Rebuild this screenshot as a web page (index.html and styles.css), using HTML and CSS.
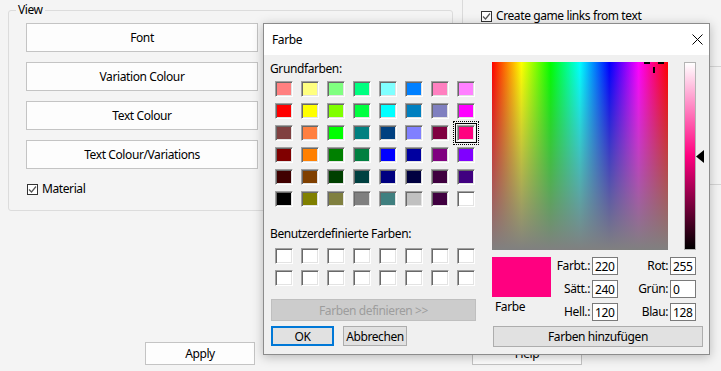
FILE: index.html
```html
<!DOCTYPE html>
<html lang="de">
<head>
    <meta charset="UTF-8">
    <title>Farbe</title>
    <link rel="stylesheet" href="styles.css">
</head>
<body>
    <div class="window">
        <div class="top">
            <fieldset class="group">
                <legend>View</legend>
                <button class="btn wide">Font</button>
                <button class="btn wide">Variation Colour</button>
                <button class="btn wide">Text Colour</button>
                <button class="btn wide">Text Colour/Variations</button>
                <label class="check material">
                    <span class="box"><svg width="9" height="9" viewBox="0 0 9 9"><path d="M1 4.5 L3.5 7 L8 1.5" fill="none" stroke="#555" stroke-width="1.2"/></svg></span>
                    Material
                </label>
            </fieldset>
            <div class="side">
                <label class="check">
                    <span class="box"><svg width="9" height="9" viewBox="0 0 9 9"><path d="M1 4.5 L3.5 7 L8 1.5" fill="none" stroke="#555" stroke-width="1.2"/></svg></span>
                    Create game links from text
                </label>
                <div class="sep first"></div>
                <div class="sep second"></div>
            </div>
        </div>

        <div class="bottom">
            <button class="btn small">Apply</button>
            <button class="btn small help">Help</button>
        </div>

        <!-- Farbauswahl-Dialog -->
        <div class="dialog">
            <div class="titlebar">
                <span>Farbe</span>
                <svg class="close" width="11" height="11" viewBox="0 0 11 11"><path d="M0.5 0.5 L10.5 10.5 M10.5 0.5 L0.5 10.5" stroke="#000" stroke-width="1"/></svg>
            </div>
            <div class="dbody">
                <div class="left">
                    <div class="lbl">Grundfarben:</div>
                    <div class="swatches" id="basic"></div>
                    <div class="lbl custom-lbl">Benutzerdefinierte Farben:</div>
                    <div class="swatches custom" id="custom"></div>
                    <button class="dbtn define" disabled>Farben definieren &gt;&gt;</button>
                    <div class="actions">
                        <button class="dbtn ok">OK</button>
                        <button class="dbtn cancel">Abbrechen</button>
                    </div>
                </div>
                <div class="right">
                    <div class="picker">
                        <div class="spectrum">
                            <svg class="cross" width="24" height="12" viewBox="0 0 24 12">
                                <rect x="0" y="0" width="6" height="2" fill="#000"/>
                                <rect x="14" y="0" width="6" height="2" fill="#000"/>
                                <rect x="9" y="5" width="2" height="6" fill="#000"/>
                            </svg>
                        </div>
                        <div class="lum">
                            <svg class="arrow" width="8" height="13" viewBox="0 0 8 13"><path d="M0 6.5 L8 0 L8 13 Z" fill="#000"/></svg>
                        </div>
                    </div>
                    <div class="values">
                        <div class="preview-col">
                            <div class="preview"></div>
                            <div class="preview-lbl">Farbe</div>
                        </div>
                        <div class="fields">
                            <span class="flbl">Farbt.:</span><input value="220">
                            <span class="flbl">Rot:</span><input value="255">
                            <span class="flbl">Sätt.:</span><input value="240">
                            <span class="flbl">Grün:</span><input value="0">
                            <span class="flbl">Hell.:</span><input value="120">
                            <span class="flbl">Blau:</span><input value="128">
                        </div>
                    </div>
                    <button class="dbtn add">Farben hinzufügen</button>
                </div>
            </div>
        </div>
    </div>

    <script>
        const basicColors = [
            '#ff8080', '#ffff80', '#80ff80', '#00ff80', '#80ffff', '#0080ff', '#ff80c0', '#ff80ff',
            '#ff0000', '#ffff00', '#80ff00', '#00ff40', '#00ffff', '#0080c0', '#8080c0', '#ff00ff',
            '#804040', '#ff8040', '#00ff00', '#008080', '#004080', '#8080ff', '#800040', '#ff0080',
            '#800000', '#ff8000', '#008000', '#008040', '#0000ff', '#0000a0', '#800080', '#8000ff',
            '#400000', '#804000', '#004000', '#004040', '#000080', '#000040', '#400040', '#400080',
            '#000000', '#808000', '#808040', '#808080', '#408080', '#c0c0c0', '#400040', '#ffffff'
        ];

        const basic = document.getElementById('basic');
        basicColors.forEach(function(color, i) {
            const sw = document.createElement('div');
            sw.className = 'sw';
            sw.style.backgroundColor = color;
            if (i === 23) sw.classList.add('selected');
            basic.appendChild(sw);
        });

        const custom = document.getElementById('custom');
        for (let i = 0; i < 16; i++) {
            const sw = document.createElement('div');
            sw.className = 'sw';
            sw.style.backgroundColor = '#fff';
            custom.appendChild(sw);
        }
    </script>
</body>
</html>
```

FILE: styles.css
```css
* {
    margin: 0;
    padding: 0;
    box-sizing: border-box;
}

body {
    font-family: 'Noto Sans', 'DejaVu Sans', sans-serif;
    font-size: 12px;
    letter-spacing: -0.4px;
    line-height: 16px;
    color: #000;
    background-color: #f4f4f4;
    width: 721px;
    height: 371px;
    overflow: hidden;
}

.window {
    position: relative;
    width: 721px;
    height: 371px;
    display: flex;
    flex-direction: column;
}

.top {
    display: flex;
    padding-left: 8px;
}

.group {
    width: 445px;
    margin-top: 2px;
    border: 1px solid #dcdcdc;
    border-radius: 3px;
    padding: 5px 0 13px 17px;
    display: flex;
    flex-direction: column;
    gap: 10px;
    min-width: 0;
}

.group legend {
    margin-left: -10px;
    padding: 0 2px;
    line-height: 16px;
}

.btn {
    font-family: inherit;
    font-size: 12px;
    letter-spacing: inherit;
    color: #000;
    background-color: #fdfdfd;
    border: 1px solid #c4c4c4;
}

.btn.wide {
    width: 232px;
    height: 29px;
}

.check {
    display: flex;
    align-items: center;
    gap: 4px;
    height: 16px;
}

.check .box {
    width: 11px;
    height: 11px;
    border: 1px solid #333;
    background-color: #fff;
    display: flex;
    align-items: center;
    justify-content: center;
}

.material {
    margin-top: 2px;
    padding-left: 1px;
}

.side {
    flex: 1;
    margin-left: 9px;
    border-left: 1px solid #dadada;
    padding: 8px 0 0 18px;
}

.sep {
    border-top: 1px solid #d5d5d5;
    margin-left: -18px;
}

.sep.first {
    margin-top: 42px;
}

.sep.second {
    margin-top: 117px;
}

.bottom {
    margin-top: auto;
    display: flex;
    padding: 0 0 6px 145px;
}

.btn.small {
    width: 110px;
    height: 23px;
}

.btn.help {
    margin-left: 217px;
}

/* Dialog */
.dialog {
    position: absolute;
    left: 263px;
    top: 23px;
    width: 447px;
    height: 332px;
    border: 1px solid #8c8c8c;
    background-color: #f0f0f0;
    box-shadow: 0 2px 10px rgba(0,0,0,0.25);
    display: flex;
    flex-direction: column;
}

.titlebar {
    height: 31px;
    background-color: #fff;
    display: flex;
    align-items: center;
    justify-content: space-between;
    padding: 0 6px 0 8px;
}

.dbody {
    flex: 1;
    display: flex;
    gap: 16px;
    padding: 6px 0 0 6px;
}

.left {
    width: 206px;
    display: flex;
    flex-direction: column;
}

.swatches {
    display: grid;
    grid-template-columns: repeat(8, 18px);
    grid-auto-rows: 16px;
    column-gap: 8px;
    row-gap: 6px;
    margin: 4px 0 0 5px;
}

.sw {
    position: relative;
    border: 1px solid;
    border-color: #a0a0a0 #fff #fff #a0a0a0;
    box-shadow: inset 1px 1px 0 #696969, inset -1px -1px 0 #e3e3e3;
}

.sw.selected {
    outline: 1px solid #000;
    outline-offset: 1px;
}

.sw.selected::after {
    content: '';
    position: absolute;
    inset: -5px;
    border: 1px dotted #000;
}

.custom-lbl {
    margin-top: 19px;
}

.swatches.custom {
    margin-top: 6px;
}

.dbtn {
    font-family: inherit;
    font-size: 12px;
    letter-spacing: inherit;
    color: #000;
    background-color: #e1e1e1;
    border: 1px solid #adadad;
}

.define {
    width: 205px;
    height: 22px;
    margin: 13px 0 0 1px;
    background-color: #cccccc;
    border-color: #bfbfbf;
    color: #9d9d9d;
}

.actions {
    display: flex;
    gap: 9px;
    margin: 5px 0 0 1px;
}

.ok {
    width: 63px;
    height: 20px;
    border: 2px solid #0078d7;
}

.cancel {
    width: 64px;
    height: 20px;
}

.right {
    display: flex;
    flex-direction: column;
}

.picker {
    display: flex;
    gap: 16px;
    margin-top: 1px;
}

.spectrum {
    position: relative;
    width: 176px;
    height: 188px;
    background:
        linear-gradient(to bottom, rgba(128,128,128,0), #808080),
        linear-gradient(to right, #f00, #ff0 16.7%, #0f0 33.3%, #0ff 50%, #00f 66.7%, #f0f 83.3%, #f00);
}

.cross {
    position: absolute;
    left: 152px;
    top: 0;
}

.lum {
    position: relative;
    width: 12px;
    height: 188px;
    border: 1px solid #b4b4b4;
    background: linear-gradient(to bottom, #fff, #ff0080 50%, #000);
}

.arrow {
    position: absolute;
    right: -9px;
    top: 87px;
}

.values {
    display: flex;
    margin-top: 7px;
}

.preview {
    width: 59px;
    height: 40px;
    background-color: #ff0080;
}

.preview-lbl {
    margin-top: 2px;
    padding-left: 3px;
}

.fields {
    display: grid;
    grid-template-columns: 39px 26px 48px 26px;
    grid-auto-rows: 18px;
    column-gap: 2px;
    row-gap: 5px;
    align-items: center;
}

.flbl {
    text-align: right;
}

.fields input {
    width: 26px;
    height: 18px;
    border: 1px solid #7a7a7a;
    background-color: #fff;
    font-family: inherit;
    font-size: 12px;
    letter-spacing: inherit;
    padding: 0 2px;
    color: #000;
}

.add {
    width: 210px;
    height: 21px;
    margin: 5px 0 0 1px;
}
```
